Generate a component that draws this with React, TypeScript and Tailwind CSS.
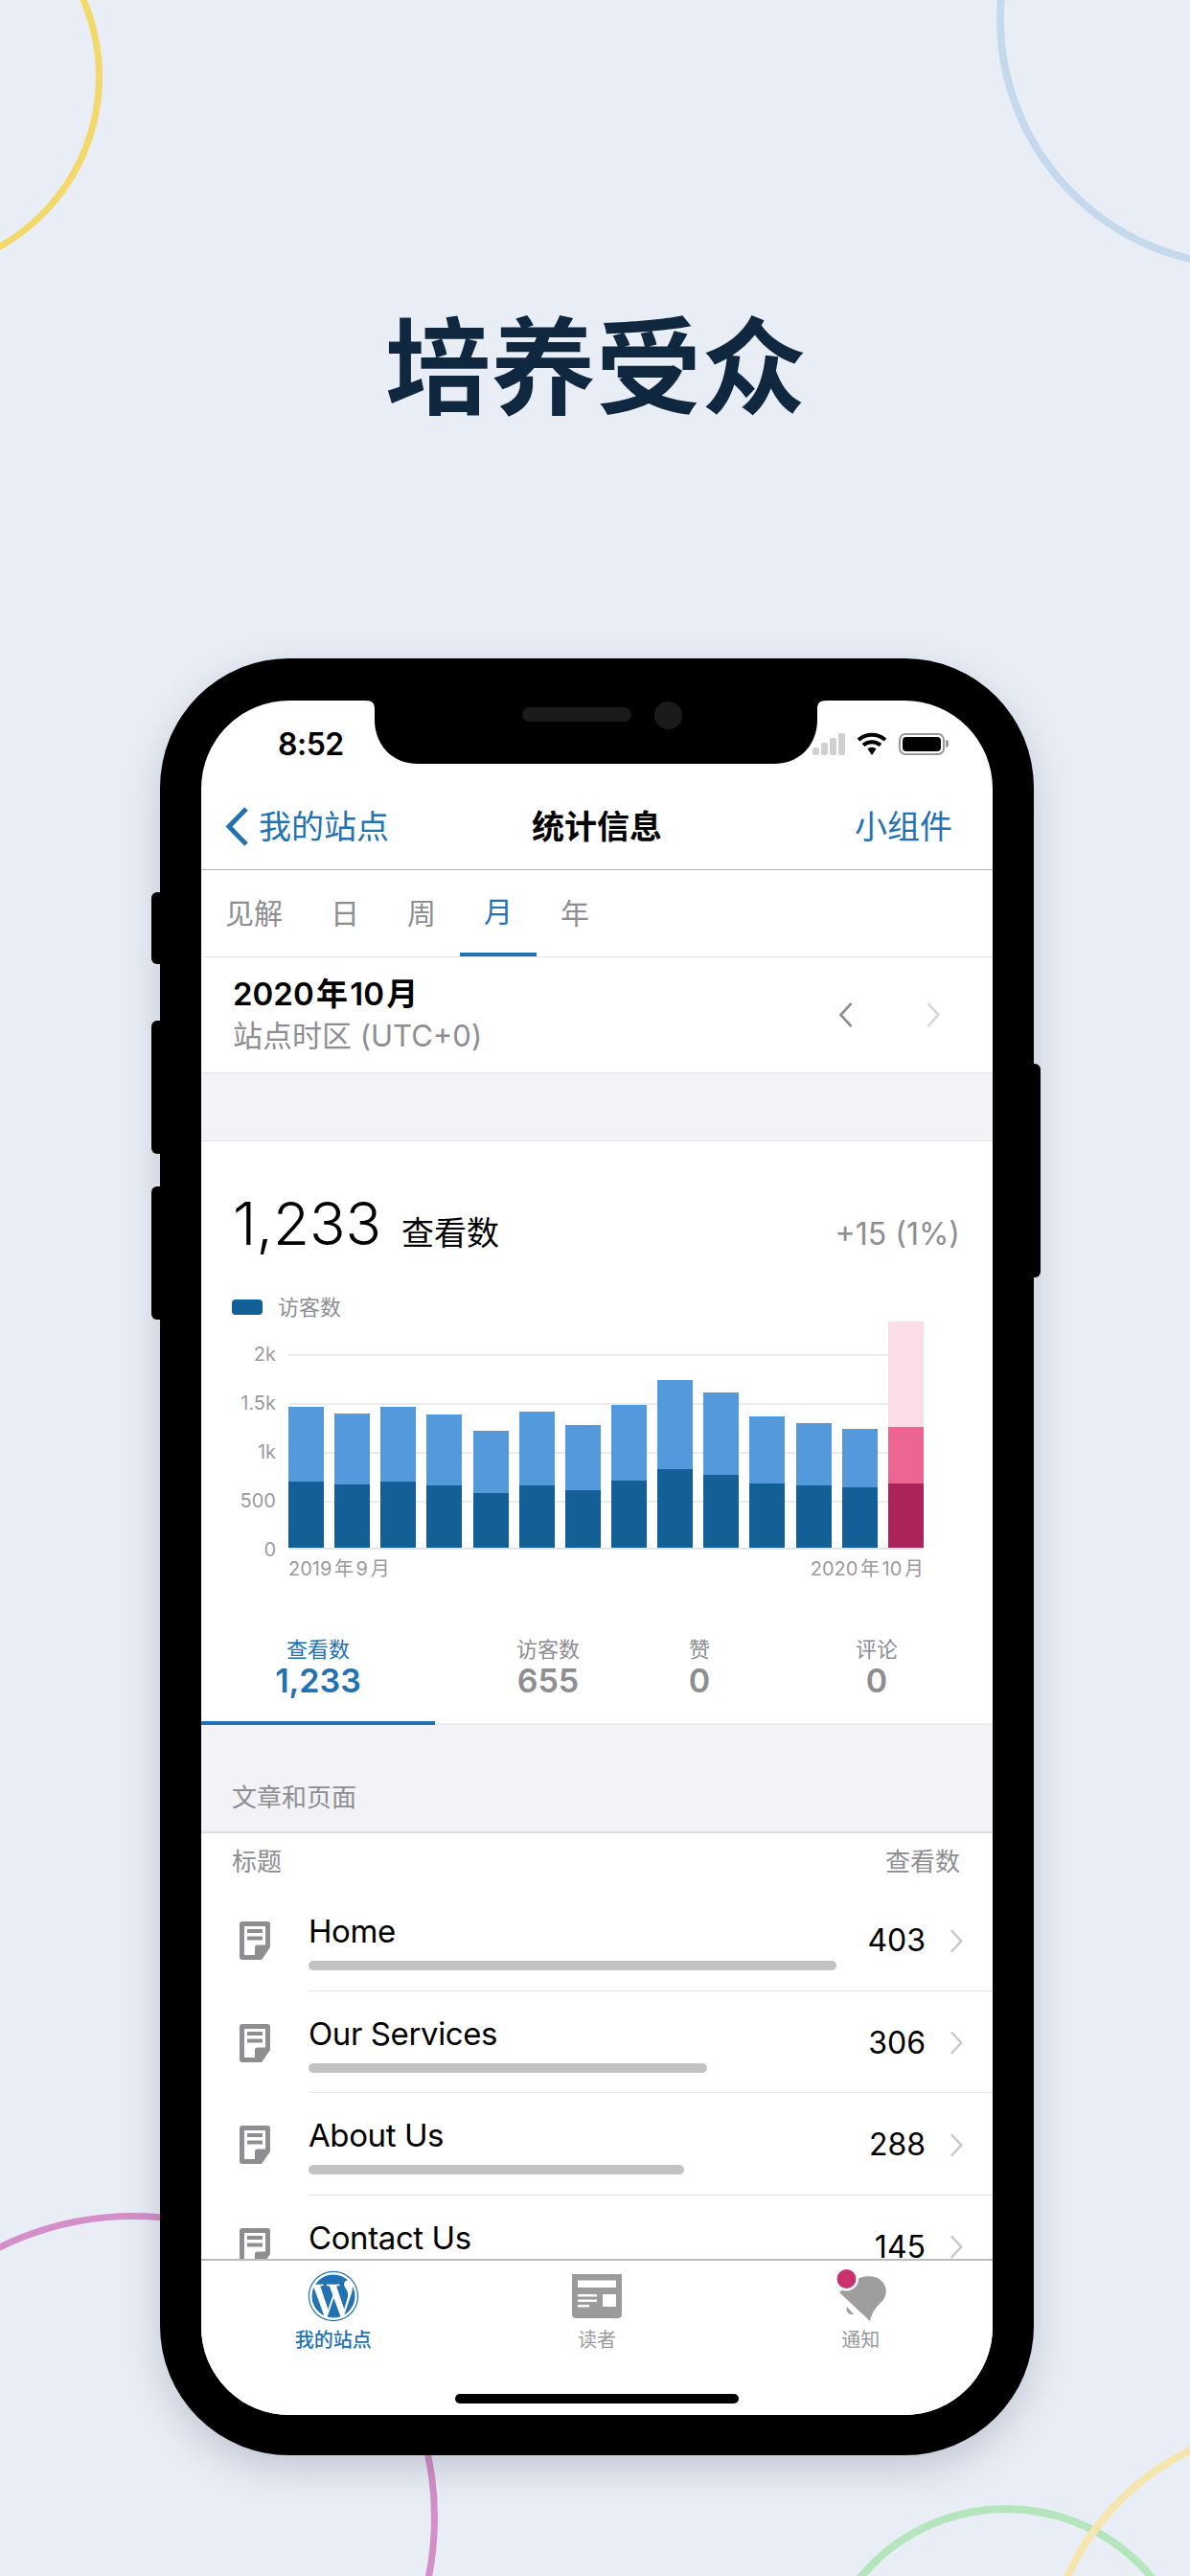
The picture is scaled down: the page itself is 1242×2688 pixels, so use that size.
import { FaWordpress } from 'react-icons/fa'

// [total views bar height, dark visitors bar height] in px
const bars = [
  [147, 69], [140, 66], [147, 69], [139, 65], [122, 57], [142, 65], [128, 60],
  [149, 70], [175, 82], [162, 76], [137, 67], [130, 65], [124, 63],
]

const grid = [
  { label: '2k', y: 32 },
  { label: '1.5k', y: 83 },
  { label: '1k', y: 134 },
  { label: '500', y: 185 },
  { label: '0', y: 236 },
]

const rows = [
  { title: 'Home', views: '403', bar: 551 },
  { title: 'Our Services', views: '306', bar: 416 },
  { title: 'About Us', views: '288', bar: 392 },
  { title: 'Contact Us', views: '145', bar: 200 },
]

const Chevron = ({ dir, className }: { dir: 'left' | 'right'; className: string }) => (
  <svg viewBox="0 0 16 26" className={className} fill="none" stroke="currentColor" strokeWidth="2.6">
    <path d={dir === 'left' ? 'M14 1 L3 13 L14 25' : 'M2 1 L13 13 L2 25'} />
  </svg>
)

const PageIcon = () => (
  <svg viewBox="0 0 32 40" className="w-8 h-10 shrink-0 text-[#8d8d92]" fill="currentColor">
    <path
      fillRule="evenodd"
      d="M3 0H29a3 3 0 0 1 3 3V27L23 40H3a3 3 0 0 1-3-3V3a3 3 0 0 1 3-3ZM5 5V35H16V27a2.5 2.5 0 0 1 2.5-2.5H27V5ZM8 8h16v4H8ZM8 15.5h16v4H8Z"
    />
  </svg>
)

const ReaderIcon = () => (
  <svg viewBox="0 0 52 46" className="w-[52px] h-[46px]" fill="#9b9b9b">
    <path
      fillRule="evenodd"
      d="M0 0H52V42a4 4 0 0 1-4 4H4a4 4 0 0 1-4-4ZM6 6.500V14H46V6.500ZM32 21V34H46V21ZM6 21V23.500H26V21ZM6 26.500V29H26V26.500ZM6 32V34.500H18V32Z"
    />
  </svg>
)

const BellIcon = () => (
  <svg viewBox="30 14 55 58" className="w-[55px] h-[58px]">
    <path
      fill="#9e9e9e"
      d="M35 39 L53 26 C58 22 72 20 79 27 C86 34 85 44 78 50 C73 55 69 60 67 69 Z"
    />
    <path fill="#9e9e9e" d="M43 54 L50 62 C45 63 41 59 43 54 Z" />
    <circle cx="42.500" cy="25" r="12.500" fill="#fff" />
    <circle cx="42.500" cy="25" r="10" fill="#c9326f" />
  </svg>
)

export default function App() {
  return (
    <div className="relative w-[1242px] h-[2688px] overflow-hidden bg-[#e9eef6] flex flex-col items-center font-['Inter','Noto_Sans_CJK_SC',sans-serif]">
      {/* background rings */}
      <div className="absolute left-[-307px] top-[-127px] w-[414px] h-[414px] rounded-full border-[7px] border-[#f3d86b]" />
      <div className="absolute left-[1040px] top-[-241px] w-[522px] h-[522px] rounded-full border-[8px] border-[#c5d9ec]" />
      <div className="absolute left-[-179px] top-[2309px] w-[636px] h-[636px] rounded-full border-[7px] border-[#d48fc8]" />
      <div className="absolute left-[849px] top-[2614px] w-[402px] h-[402px] rounded-full border-[8px] border-[#b5e5bd]" />
      <div className="absolute left-[1086px] top-[2526px] w-[548px] h-[548px] rounded-full border-[8px] border-[#f5e6b0]" />

      <header className="relative h-[687px] w-full pt-[312px] pl-[2px] text-center">
        <h1 className="text-[110px] leading-[128px] font-bold text-[#0f2840] font-['Noto_Sans_CJK_SC',serif]">
          培养受众
        </h1>
      </header>

      {/* phone */}
      <div className="relative ml-[4px] w-[912px] h-[1875px] rounded-[135px] bg-black pt-[44px] pl-[43px] shadow-[0_14px_40px_rgba(50,60,80,0.22)]">
        <div className="absolute left-[-9px] top-[244px] w-[9px] h-[75px] rounded-l-md bg-black" />
        <div className="absolute left-[-9px] top-[378px] w-[9px] h-[139px] rounded-l-md bg-black" />
        <div className="absolute left-[-9px] top-[551px] w-[9px] h-[139px] rounded-l-md bg-black" />
        <div className="absolute right-[-7px] top-[423px] w-[7px] h-[223px] rounded-r-md bg-black" />

        <div className="relative w-[826px] h-[1789px] rounded-[92px] bg-white overflow-hidden flex flex-col">
          {/* notch */}
          <svg viewBox="-10 0 482 66" className="absolute left-[171px] top-0 w-[482px] h-[66px]" fill="#000">
            <path d="M-10 0 C-2 0 0 3 0 9 V20 C0 46 18 66 45 66 H417 C444 66 462 46 462 20 V9 C462 3 464 0 472 0 Z" />
          </svg>
          <div className="absolute left-[335px] top-[7px] w-[114px] h-[15px] rounded-full bg-[#1b1b1b]" />
          <div className="absolute left-[473px] top-[1px] w-[29px] h-[29px] rounded-full bg-[#1b1b1b]" />

          {/* status bar */}
          <div className="relative h-[99px] shrink-0 flex items-start justify-between pl-[80px] pr-[46px] pt-[28px]">
            <span className="text-[32px] leading-[36px] font-semibold text-black tracking-[-0.5px]">8:52</span>
            <div className="flex items-center gap-[12px] pt-[5px]">
              <div className="flex items-end gap-[2px] h-[23px]">
                <div className="w-[7px] h-[8px] rounded-[2px] bg-[#d0d0d0]" />
                <div className="w-[7px] h-[13px] rounded-[2px] bg-[#d0d0d0]" />
                <div className="w-[7px] h-[18px] rounded-[2px] bg-[#d0d0d0]" />
                <div className="w-[7px] h-[23px] rounded-[2px] bg-[#d0d0d0]" />
              </div>
              <svg viewBox="0 0 32 24" className="w-[32px] h-[24px]" fill="none" stroke="#000" strokeWidth="4">
                <path d="M2 8 C10 1 22 1 30 8" />
                <path d="M7 13.500 C12 9 20 9 25 13.500" />
                <path d="M11.500 17.500 L16 24 L20.500 17.500 C18 15 14 15 11.500 17.500 Z" fill="#000" stroke="none" />
              </svg>
              <div className="flex items-center gap-[1px]">
                <div className="w-[48px] h-[23px] rounded-[7px] border-2 border-[#999] p-[2px]">
                  <div className="w-full h-full rounded-[4px] bg-black" />
                </div>
                <div className="w-[3px] h-[8px] rounded-r-sm bg-[#999]" />
              </div>
            </div>
          </div>

          {/* nav bar */}
          <div className="relative h-[78px] shrink-0 flex items-center justify-between pl-[25px] pr-[42px] pb-[12px] border-b border-[#b4b4b7]">
            <div className="flex items-center gap-[10px] text-[#2271b1]">
              <svg viewBox="0 0 25 41" className="w-[25px] h-[41px]" fill="none" stroke="currentColor" strokeWidth="5">
                <path d="M22 2 L4 20.500 L22 39" />
              </svg>
              <span className="text-[34px] leading-[40px]">我的站点</span>
            </div>
            <span className="absolute left-0 right-0 text-center text-[34px] leading-[40px] font-semibold text-black">统计信息</span>
            <span className="text-[34px] leading-[40px] text-[#2271b1]">小组件</span>
          </div>

          {/* period tabs */}
          <div className="h-[91px] shrink-0 flex border-b border-[#e3e3e6] text-[30px] text-[#8d8d92]">
            <div className="w-[110px] flex items-center justify-center">见解</div>
            <div className="w-[80px] flex items-center justify-center">日</div>
            <div className="w-[80px] flex items-center justify-center">周</div>
            <div className="w-[80px] flex items-center justify-center border-b-4 border-[#2271b1] text-[#2271b1]">月</div>
            <div className="w-[80px] flex items-center justify-center">年</div>
          </div>

          {/* date */}
          <div className="h-[120px] shrink-0 flex items-center justify-between pl-[33px] pr-[53px]">
            <div>
              <div className="text-[33px] leading-[44px] font-semibold text-black [word-spacing:-6px]">2020 年 10 月</div>
              <div className="text-[31px] leading-[44px] text-[#8d8d92]">站点时区 (UTC+0)</div>
            </div>
            <div className="flex items-center gap-[75px]">
              <Chevron dir="left" className="w-[17px] h-[26px] text-[#8d8d92]" />
              <Chevron dir="right" className="w-[17px] h-[26px] text-[#d8d8db]" />
            </div>
          </div>

          <div className="h-[72px] shrink-0 bg-[#f2f2f7] border-y border-[#e3e3e6]" />

          {/* stats */}
          <div className="h-[609px] shrink-0 flex flex-col">
            <div className="flex items-baseline justify-between pt-[55px] pl-[33px] pr-[34px]">
              <div className="flex items-baseline gap-[21px]">
                <span className="text-[62px] leading-[62px] font-light text-black">1,233</span>
                <span className="text-[34px] text-black">查看数</span>
              </div>
              <span className="text-[32px] text-[#8d8d92]">+15 (1%)</span>
            </div>

            <div className="h-[30px] mt-[37px] flex items-center gap-[16px] pl-[32px] text-[22px] text-[#8d8d92]">
              <div className="w-[32px] h-[16px] rounded-[4px] bg-[#135f97]" />
              <span>访客数</span>
            </div>

            <div className="relative ml-[91px] w-[663px] h-[236px] mt-[2px] flex items-end justify-between border-b-2 border-[#e4e4e7]">
              {grid.slice(0, 4).map((g) => (
                <div key={g.label} className="absolute left-0 right-0 h-[2px] bg-[#ebebee]" style={{ top: g.y }} />
              ))}
              {grid.map((g) => (
                <span key={g.label} className="absolute right-[676px] text-[20px] leading-[24px] text-[#9a9a9e]" style={{ top: g.y - 12 }}>
                  {g.label}
                </span>
              ))}
              {bars.map(([total, dark], i) => (
                <div key={i} className="relative w-[37px] bg-[#5599dd]" style={{ height: total }}>
                  <div className="absolute bottom-0 left-0 right-0 bg-[#135f97]" style={{ height: dark }} />
                </div>
              ))}
              <div className="relative w-[37px] h-[236px] bg-[#fbdde8]">
                <div className="absolute bottom-0 left-0 right-0 h-[126px] bg-[#ec6593]" />
                <div className="absolute bottom-0 left-0 right-0 h-[67px] bg-[#ab235a]" />
              </div>
            </div>
            <div className="ml-[91px] w-[663px] mt-[6px] flex justify-between text-[20px] leading-[28px] text-[#9a9a9e] [word-spacing:-3px]">
              <span>2019 年 9 月</span>
              <span>2020 年 10 月</span>
            </div>

            {/* metric tabs */}
            <div className="mt-auto h-[105px] flex border-b-2 border-[#ebebee] text-center text-[#8d8d92]">
              <div className="w-[244px] border-b-4 border-[#2271b1] text-[#2271b1] mb-[-2px] pt-[12px]">
                <div className="text-[22px] leading-[28px]">查看数</div>
                <div className="text-[34px] leading-[38px] font-semibold">1,233</div>
              </div>
              <div className="w-[236px] pt-[12px]">
                <div className="text-[22px] leading-[28px]">访客数</div>
                <div className="text-[34px] leading-[38px] font-semibold">655</div>
              </div>
              <div className="w-[80px] pt-[12px]">
                <div className="text-[22px] leading-[28px]">赞</div>
                <div className="text-[34px] leading-[38px] font-semibold">0</div>
              </div>
              <div className="w-[266px] pl-[24px] pt-[12px]">
                <div className="text-[22px] leading-[28px]">评论</div>
                <div className="text-[34px] leading-[38px] font-semibold">0</div>
              </div>
            </div>
          </div>

          {/* posts and pages */}
          <div className="h-[113px] shrink-0 bg-[#f2f2f7] border-b-2 border-[#dcdce0] flex items-end pl-[32px] pb-[17px] text-[26px] leading-[36px] text-[#8d8d92]">
            文章和页面
          </div>
          <div className="flex-1 min-h-0 overflow-hidden">
            <div className="h-[58px] flex items-center justify-between pl-[32px] pr-[34px] text-[26px] text-[#8d8d92]">
              <span>标题</span>
              <span>查看数</span>
            </div>
            {rows.map((r) => (
              <div key={r.title} className="h-[106.5px] flex">
                <div className="w-[112px] pl-[40px] pt-[34px] shrink-0">
                  <PageIcon />
                </div>
                <div className="flex-1 flex border-b border-[#e3e3e6]">
                  <div className="flex-1 pt-[24px]">
                    <div className="text-[33px] leading-[40px] text-black tracking-[-0.4px]">{r.title}</div>
                    <div className="h-[10px] mt-[11px] rounded-full bg-[#c2c2c4]" style={{ width: r.bar }} />
                  </div>
                  <div className="flex items-center gap-[25px] pr-[30px] pt-[3px]">
                    <span className="text-[32px] text-black">{r.views}</span>
                    <Chevron dir="right" className="w-[15px] h-[25px] text-[#c8c8cc]" />
                  </div>
                </div>
              </div>
            ))}
          </div>

          {/* tab bar */}
          <div className="relative h-[163px] shrink-0 bg-white border-t-2 border-[#bcbcbf] grid grid-cols-3 text-[20px] leading-[26px] text-[#9a9a9e]">
            <div className="flex flex-col items-center">
              <div className="h-[70px] flex items-center pt-[4px]">
                <FaWordpress className="w-[54px] h-[54px] text-[#2271b1]" />
              </div>
              <span className="text-[#2271b1] font-medium">我的站点</span>
            </div>
            <div className="flex flex-col items-center">
              <div className="h-[70px] flex items-center pt-[4px]">
                <ReaderIcon />
              </div>
              <span>读者</span>
            </div>
            <div className="flex flex-col items-center">
              <div className="h-[70px] flex items-center pt-[4px]">
                <BellIcon />
              </div>
              <span>通知</span>
            </div>
            <div className="absolute left-[265px] top-[139px] w-[296px] h-[10px] rounded-full bg-black" />
          </div>
        </div>
      </div>
    </div>
  )
}
